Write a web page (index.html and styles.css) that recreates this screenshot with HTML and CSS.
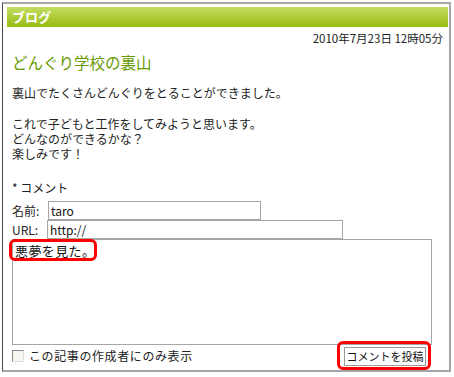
FILE: index.html
```html
<!DOCTYPE html>
<html lang="ja">
<head>
  <meta charset="UTF-8" />
  <title>ブログ</title>
  <link rel="stylesheet" href="styles.css">
</head>
<body>

  <div class="blog">
    <div class="blog-head">ブログ</div>

    <div class="blog-body">
      <div class="date">2010年7月23日 12時05分</div>
      <h2 class="title">どんぐり学校の裏山</h2>

      <p class="text">裏山でたくさんどんぐりをとることができました。</p>
      <p class="text text-gap">これで子どもと工作をしてみようと思います。<br>どんなのができるかな？<br>楽しみです！</p>

      <!-- コメント欄 -->
      <form class="comment">
        <div class="comment-head">* コメント</div>
        <div class="row row-first">
          <label class="lbl lbl-name">名前:</label>
          <input class="field field-name" type="text" value="taro">
        </div>
        <div class="row">
          <label class="lbl lbl-url">URL:</label>
          <input class="field field-url" type="text" value="http://">
        </div>
        <div class="area-wrap">
          <textarea class="area">悪夢を見た。</textarea>
          <span class="mark mark-area"></span>
        </div>
        <div class="foot">
          <label class="only">
            <input class="check" type="checkbox">
            この記事の作成者にのみ表示
          </label>
          <div class="btn-wrap">
            <button class="send" type="button">コメントを投稿</button>
            <span class="mark mark-btn"></span>
          </div>
        </div>
      </form>
    </div>
  </div>

</body>
</html>
```

FILE: styles.css
```css
body {
  margin: 0;
  padding: 2px 0 0 2px;
  background: #fff;
  font-family: "Noto Sans CJK JP", "Noto Sans", sans-serif;
  font-size: 12px;
  color: #222;
}

.blog {
  width: 442px;
  height: 363px;
  border-left: 1px solid #4a4a4a;
  border-top: 2px solid #a6a6a6;
  border-right: 2px solid #a6a6a6;
  border-bottom: 2px solid #a6a6a6;
  padding: 3px 0 0 4px;
}

.blog-head {
  height: 20px;
  margin-right: 1px;
  padding-left: 5px;
  background: linear-gradient(#c3de62, #99ba12);
  color: #fff;
  font-weight: bold;
  font-size: 13px;
  line-height: 20px;
}

.blog-body {
  padding: 4px 6px 0 5px;
}

.date {
  text-align: right;
  line-height: 15px;
  font-size: 11.5px;
}

.title {
  margin: 6px 0 0;
  font-size: 15.5px;
  font-weight: normal;
  line-height: 20px;
  color: #669a00;
}

.text {
  margin: 13px 0 0;
  line-height: 15px;
}

.text-gap {
  margin-top: 16px;
}

.comment {
  margin-top: 19px;
}

.comment-head {
  line-height: 15px;
}

.row {
  display: flex;
  align-items: center;
  height: 19px;
}

.row-first {
  margin-top: 6px;
}

.lbl {
  line-height: 19px;
}

.lbl-name { width: 36px; }
.lbl-url { width: 35px; }

.field {
  box-sizing: border-box;
  height: 19px;
  margin: 0;
  padding: 0 2px;
  border: 1px solid #a6a6a6;
  font-family: inherit;
  font-size: 12px;
  color: #111;
  outline: none;
}

.field-name { width: 213px; }
.field-url { width: 296px; }

.area-wrap {
  position: relative;
  width: 420px;
  height: 106px;
}

.area {
  box-sizing: border-box;
  display: block;
  width: 420px;
  height: 106px;
  margin: 0;
  padding: 3px 2px;
  border: 1px solid #a6a6a6;
  resize: none;
  font-family: inherit;
  font-size: 13px;
  letter-spacing: 0.4px;
  line-height: 15px;
  color: #111;
  outline: none;
}

.foot {
  display: flex;
  justify-content: space-between;
  align-items: flex-start;
  width: 414px;
  margin-top: 2px;
}

.only {
  display: flex;
  align-items: center;
  gap: 5px;
  letter-spacing: 0.6px;
  line-height: 15px;
  margin-top: 1px;
}

.check {
  appearance: none;
  box-sizing: border-box;
  width: 12px;
  height: 12px;
  margin: 0;
  border: 1px solid;
  border-color: #8c8c8c #dcdcdc #dcdcdc #8c8c8c;
  background: #f7f7f2;
}

.btn-wrap {
  position: relative;
}

.send {
  box-sizing: border-box;
  width: 82px;
  height: 19px;
  padding: 0;
  border: 1px solid #9a9a9a;
  background: #fff;
  font-family: inherit;
  font-size: 11px;
  line-height: 17px;
  white-space: nowrap;
  color: #111;
}

.mark {
  position: absolute;
  box-sizing: border-box;
  border: 3px solid #f00;
  border-radius: 6px;
}

.mark-area {
  left: -3px;
  top: 0;
  width: 88px;
  height: 22px;
}

.mark-btn {
  left: -7px;
  top: -6px;
  width: 94px;
  height: 29px;
}
```
